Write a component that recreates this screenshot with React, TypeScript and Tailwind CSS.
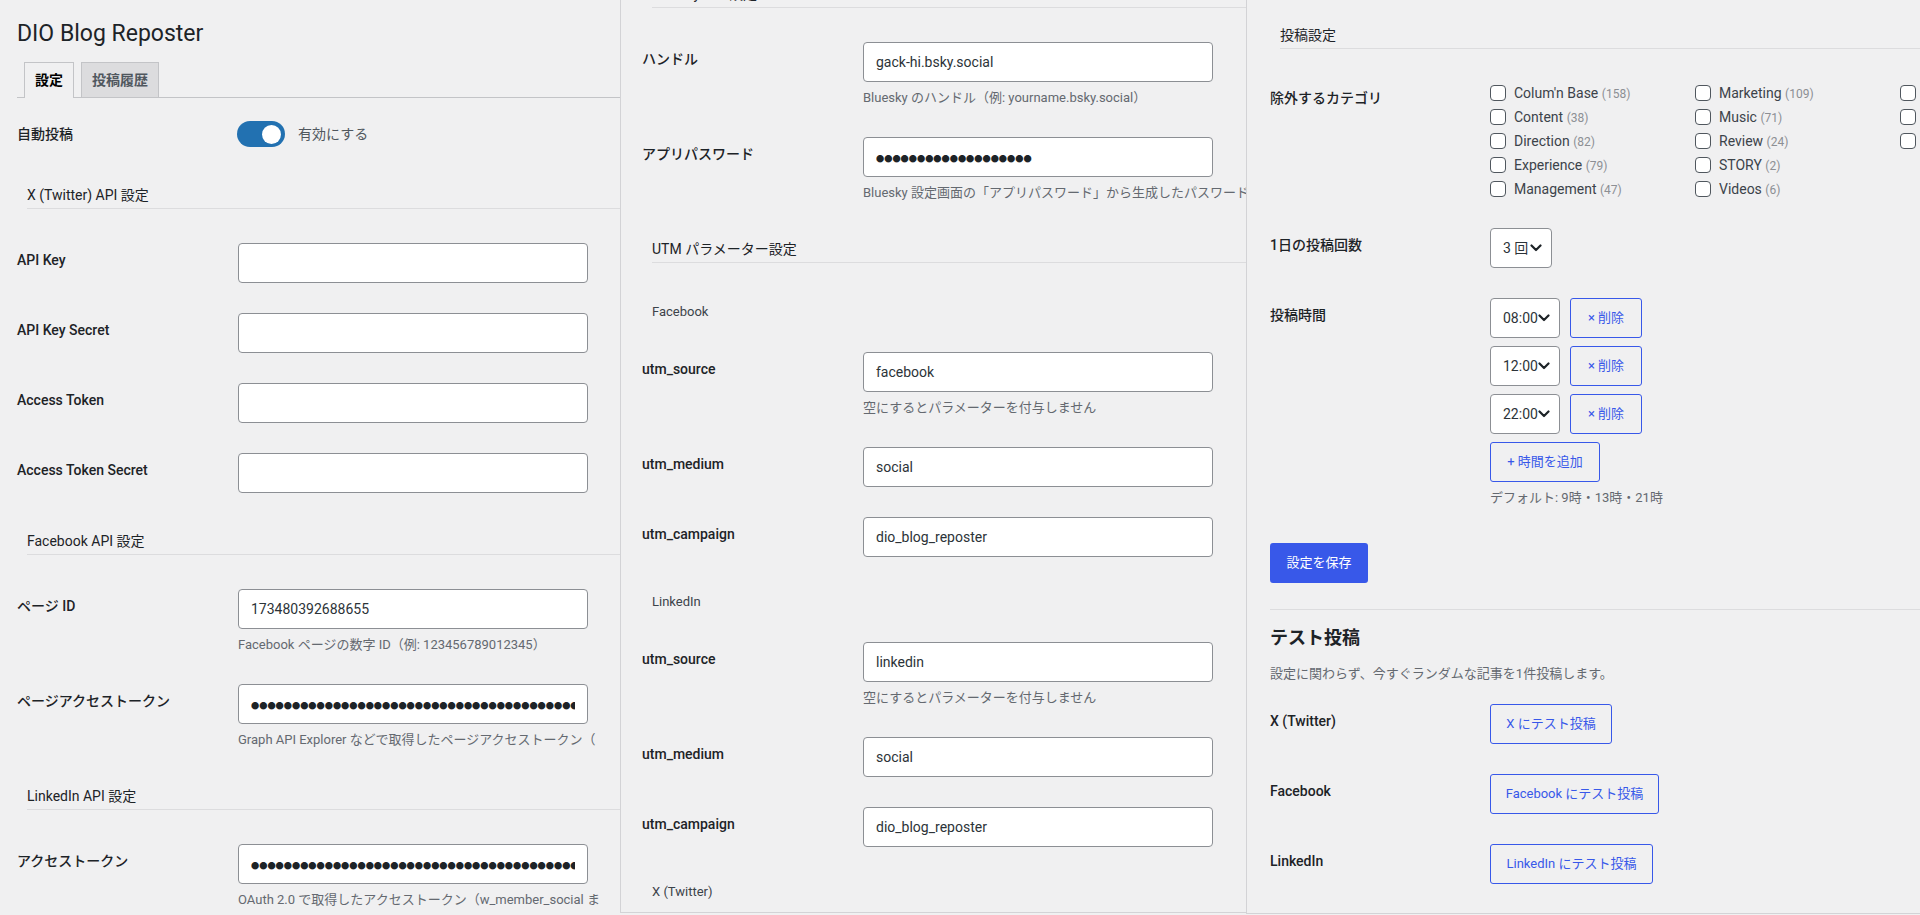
import type { ReactNode } from "react";

// shared bits of the WP-admin look
const LABEL = "shrink-0 pt-[7px] text-[14px] leading-[20px] font-medium text-[#1d2327] whitespace-nowrap";
const DESC = "mt-[7px] whitespace-nowrap text-[13px] leading-[18px] text-[#646970]";
const OUTLINE =
  "flex h-[40px] shrink-0 items-center justify-center whitespace-nowrap rounded-[3px] border border-[#3858e9] text-[13px] text-[#3858e9]";

function Dots({ count }: { count: number }) {
  return (
    <span className="font-[family-name:'Noto_Sans_CJK_JP',sans-serif] text-[8.2px] leading-none text-[#1d2327]">
      {"●".repeat(count)}
    </span>
  );
}

function TextBox({ value, dots }: { value?: string; dots?: number }) {
  return (
    <div className="flex h-[40px] w-[350px] items-center rounded-[4px] border border-[#8c8f94] bg-white pl-[12px] pr-[12px] text-[14px] text-[#2c3338]">
      <div className="min-w-0 flex-1 overflow-hidden whitespace-nowrap">{dots ? <Dots count={dots} /> : value}</div>
    </div>
  );
}

function Row({
  label,
  value,
  dots,
  desc,
  gap = "mt-[30px]",
}: {
  label: string;
  value?: string;
  dots?: number;
  desc?: string;
  gap?: string;
}) {
  return (
    <div className={`flex ${gap}`}>
      <div className={`${LABEL} w-[221px]`}>{label}</div>
      <div>
        <TextBox value={value} dots={dots} />
        {desc && <p className={DESC}>{desc}</p>}
      </div>
    </div>
  );
}

function Heading({ children, className = "" }: { children: ReactNode; className?: string }) {
  return (
    <h2
      className={`ml-[10px] whitespace-nowrap border-b border-[#dcdcde] pb-[3px] text-[14px] leading-[20px] font-normal text-[#1d2327] ${className}`}
    >
      {children}
    </h2>
  );
}

function SubHeading({ children, className = "" }: { children: ReactNode; className?: string }) {
  return <h3 className={`ml-[10px] text-[13px] leading-[20px] font-normal text-[#3c434a] ${className}`}>{children}</h3>;
}

function Chevron() {
  return (
    <svg width="12" height="8" viewBox="0 0 12 8" className="shrink-0">
      <path d="M1.5 1.5l4.5 4.5 4.5-4.5" fill="none" stroke="#1d2327" strokeWidth="2.2" strokeLinecap="round" strokeLinejoin="round" />
    </svg>
  );
}

function Select({ value, width }: { value: string; width: string }) {
  return (
    <div
      className={`flex h-[40px] ${width} shrink-0 items-center justify-between rounded-[4px] border border-[#8c8f94] bg-white pl-[12px] pr-[9px] text-[14px] text-[#2c3338]`}
    >
      <span>{value}</span>
      <Chevron />
    </div>
  );
}

const CATEGORIES: { name?: string; count?: number }[] = [
  { name: "Colum'n Base", count: 158 },
  { name: "Content", count: 38 },
  { name: "Direction", count: 82 },
  { name: "Experience", count: 79 },
  { name: "Management", count: 47 },
  { name: "Marketing", count: 109 },
  { name: "Music", count: 71 },
  { name: "Review", count: 24 },
  { name: "STORY", count: 2 },
  { name: "Videos", count: 6 },
  {},
  {},
  {},
];

function SettingsPanel() {
  return (
    <section className="h-[915px] w-[620px] shrink-0 overflow-hidden pl-[17px]">
      <h1 className="pt-[19px] text-[23px] leading-[30px] font-normal text-[#1d2327]">DIO Blog Reposter</h1>
      <nav className="mt-[13px] flex h-[36px] items-end gap-[7px] border-b border-[#c3c4c7] pl-[7px]">
        <span className="-mb-px flex h-[36px] items-center border border-b-0 border-[#c3c4c7] bg-[#f0f0f1] px-[10px] text-[14px] font-semibold text-black">
          設定
        </span>
        <span className="flex h-[35px] items-center border border-b-0 border-[#c3c4c7] bg-[#dcdcde] px-[10px] text-[14px] font-semibold text-[#50575e]">
          投稿履歴
        </span>
      </nav>

      <div className="mt-[23px] flex items-center">
        <div className="w-[220px] shrink-0 text-[14px] font-medium text-[#1d2327]">自動投稿</div>
        <span className="flex h-[26px] w-[48px] items-center justify-end rounded-full bg-[#2271b1] px-[4px]">
          <span className="h-[19px] w-[19px] rounded-full bg-white" />
        </span>
        <span className="ml-[13px] text-[14px] text-[#50575e]">有効にする</span>
      </div>

      <Heading className="mt-[38px]">X (Twitter) API 設定</Heading>
      <Row label="API Key" gap="mt-[34px]" />
      <Row label="API Key Secret" />
      <Row label="Access Token" />
      <Row label="Access Token Secret" />

      <Heading className="mt-[38px]">Facebook API 設定</Heading>
      <Row
        label="ページ ID"
        gap="mt-[34px]"
        value="173480392688655"
        desc="Facebook ページの数字 ID（例: 123456789012345）"
      />
      <Row
        label="ページアクセストークン"
        dots={60}
        desc="Graph API Explorer などで取得したページアクセストークン（"
      />

      <Heading className="mt-[37px]">LinkedIn API 設定</Heading>
      <Row
        label="アクセストークン"
        gap="mt-[34px]"
        dots={60}
        desc="OAuth 2.0 で取得したアクセストークン（w_member_social ま"
      />
    </section>
  );
}

function UtmPanel() {
  return (
    <section className="h-[913px] w-[626px] shrink-0 overflow-hidden border-b border-l border-[#d3d3d6] pl-[21px]">
      <Heading className="-mt-[16px]">Bluesky API 設定</Heading>
      <Row
        label="ハンドル"
        gap="mt-[34px]"
        value="gack-hi.bsky.social"
        desc="Bluesky のハンドル（例: yourname.bsky.social）"
      />
      <Row
        label="アプリパスワード"
        dots={19}
        desc="Bluesky 設定画面の「アプリパスワード」から生成したパスワード"
      />

      <Heading className="mt-[37px]">UTM パラメーター設定</Heading>

      <SubHeading className="mt-[39px]">Facebook</SubHeading>
      <Row label="utm_source" value="facebook" desc="空にするとパラメーターを付与しません" />
      <Row label="utm_medium" value="social" />
      <Row label="utm_campaign" value="dio_blog_reposter" />

      <SubHeading className="mt-[35px]">LinkedIn</SubHeading>
      <Row label="utm_source" value="linkedin" desc="空にするとパラメーターを付与しません" />
      <Row label="utm_medium" value="social" />
      <Row label="utm_campaign" value="dio_blog_reposter" />

      <SubHeading className="mt-[35px]">X (Twitter)</SubHeading>
    </section>
  );
}

function PostingPanel() {
  return (
    <section className="h-[914px] min-w-0 flex-1 overflow-hidden border-b border-l border-[#d3d3d6] pl-[23px]">
      <Heading className="mt-[25px]">投稿設定</Heading>

      <div className="mt-[32px] flex">
        <div className={`${LABEL} w-[220px]`}>除外するカテゴリ</div>
        <div className="grid shrink-0 auto-cols-[205px] grid-flow-col grid-rows-5">
          {CATEGORIES.map((c, i) => (
            <label key={i} className="flex h-[24px] items-center gap-[8px] whitespace-nowrap">
              <span className="h-[16px] w-[16px] shrink-0 rounded-[4px] border border-[#50575e] bg-white" />
              {c.name && (
                <span className="text-[14px] text-[#3c434a]">
                  {c.name} <span className="text-[12px] text-[#8c8f94]">({c.count})</span>
                </span>
              )}
            </label>
          ))}
        </div>
      </div>

      <div className="mt-[27px] flex">
        <div className={`${LABEL} w-[220px]`}>1日の投稿回数</div>
        <Select value="3 回" width="w-[62px]" />
      </div>

      <div className="mt-[30px] flex">
        <div className={`${LABEL} w-[220px]`}>投稿時間</div>
        <div className="flex flex-col gap-[8px]">
          {["08:00", "12:00", "22:00"].map((t) => (
            <div key={t} className="flex gap-[10px]">
              <Select value={t} width="w-[70px]" />
              <button className={`${OUTLINE} w-[72px]`}>× 削除</button>
            </div>
          ))}
          <button className={`${OUTLINE} w-[110px]`}>+ 時間を追加</button>
          <p className="-mt-[1px] text-[13px] leading-[18px] text-[#646970]">デフォルト: 9時・13時・21時</p>
        </div>
      </div>

      <button className="mt-[36px] flex h-[40px] w-[98px] items-center justify-center rounded-[3px] bg-[#3858e9] text-[13px] text-white">
        設定を保存
      </button>

      <hr className="mt-[26px] border-0 border-t border-[#dcdcde]" />

      <h2 className="mt-[16px] text-[18px] leading-[24px] font-semibold text-[#1d2327]">テスト投稿</h2>
      <p className="mt-[15px] text-[13px] leading-[18px] text-[#646970]">設定に関わらず、今すぐランダムな記事を1件投稿します。</p>

      {[
        { label: "X (Twitter)", button: "X にテスト投稿", w: "w-[122px]" },
        { label: "Facebook", button: "Facebook にテスト投稿", w: "w-[169px]" },
        { label: "LinkedIn", button: "LinkedIn にテスト投稿", w: "w-[163px]" },
      ].map((r, i) => (
        <div key={r.label} className={`flex ${i === 0 ? "mt-[21px]" : "mt-[30px]"}`}>
          <div className={`${LABEL} w-[220px] pt-[5px]`}>{r.label}</div>
          <button className={`${OUTLINE} ${r.w}`}>{r.button}</button>
        </div>
      ))}
      <div className="mt-[29px] flex">
        <div className={`${LABEL} w-[220px]`}>Bluesky</div>
        <button className={`${OUTLINE} w-[158px]`}>Bluesky にテスト投稿</button>
      </div>
    </section>
  );
}

export default function App() {
  return (
    <div className="flex h-[915px] w-[1920px] overflow-hidden bg-[#f0f0f1] font-[family-name:Roboto,'Noto_Sans_CJK_JP',sans-serif] text-[#1d2327]">
      <SettingsPanel />
      <UtmPanel />
      <PostingPanel />
    </div>
  );
}
